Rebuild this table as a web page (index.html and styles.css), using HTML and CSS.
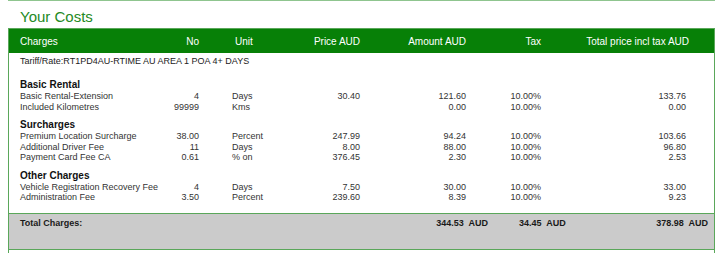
FILE: index.html
```html
<!DOCTYPE html>
<html>
<head>
<meta charset="utf-8">
<link rel="stylesheet" href="styles.css">
</head>
<body>
<div class="page">
  <div class="topline"></div>
  <h1 class="title">Your Costs</h1>
  <div class="box">
    <div class="grid head">
      <div>Charges</div>
      <div class="r">No</div>
      <div class="unit">Unit</div>
      <div class="r">Price AUD</div>
      <div class="r">Amount AUD</div>
      <div class="r">Tax</div>
      <div class="r tot">Total price incl tax AUD</div>
    </div>
    <div class="content">
      <div class="tariff">Tariff/Rate:RT1PD4AU-RTIME AU AREA 1 POA 4+ DAYS</div>

      <div class="section first">Basic Rental</div>
      <div class="grid row"><div>Basic Rental-Extension</div><div class="r">4</div><div class="unit">Days</div><div class="r">30.40</div><div class="r">121.60</div><div class="r">10.00%</div><div class="r">133.76</div></div>
      <div class="grid row"><div>Included Kilometres</div><div class="r">99999</div><div class="unit">Kms</div><div class="r"></div><div class="r">0.00</div><div class="r">10.00%</div><div class="r">0.00</div></div>

      <div class="section">Surcharges</div>
      <div class="grid row"><div>Premium Location Surcharge</div><div class="r">38.00</div><div class="unit">Percent</div><div class="r">247.99</div><div class="r">94.24</div><div class="r">10.00%</div><div class="r">103.66</div></div>
      <div class="grid row"><div>Additional Driver Fee</div><div class="r">11</div><div class="unit">Days</div><div class="r">8.00</div><div class="r">88.00</div><div class="r">10.00%</div><div class="r">96.80</div></div>
      <div class="grid row"><div>Payment Card Fee CA</div><div class="r">0.61</div><div class="unit">% on</div><div class="r">376.45</div><div class="r">2.30</div><div class="r">10.00%</div><div class="r">2.53</div></div>

      <div class="section">Other Charges</div>
      <div class="grid row"><div>Vehicle Registration Recovery Fee</div><div class="r">4</div><div class="unit">Days</div><div class="r">7.50</div><div class="r">30.00</div><div class="r">10.00%</div><div class="r">33.00</div></div>
      <div class="grid row"><div>Administration Fee</div><div class="r">3.50</div><div class="unit">Percent</div><div class="r">239.60</div><div class="r">8.39</div><div class="r">10.00%</div><div class="r">9.23</div></div>
    </div>
    <div class="total">
      <div>Total Charges:</div>
      <div class="r">344.53&nbsp; AUD</div>
      <div class="tax">34.45&nbsp; AUD</div>
      <div class="r">378.98&nbsp; AUD</div>
    </div>
    <div class="after"></div>
  </div>
</div>
</body>
</html>
```
FILE: styles.css
```css
html, body {
  margin: 0;
  padding: 0;
  background: #ffffff;
}
body {
  font-family: "Liberation Sans", Arial, sans-serif;
  color: #333333;
}
.page {
  padding-left: 8px;
  width: 707px;
}
.topline {
  height: 0;
  border-top: 1px solid #8fc58f;
}
.title {
  margin: 7px 0 3px 12px;
  font-size: 15px;
  line-height: 17px;
  font-weight: normal;
  color: #248a24;
}
.box {
  border-left: 1px solid #5aa75a;
  border-right: 1px solid #5aa75a;
  border-top: 1px solid #5aa75a;
}
.grid {
  display: grid;
  grid-template-columns: 140px 39px 101px 60px 106px 75px 145px;
  padding-left: 11px;
  white-space: nowrap;
}
.r {
  text-align: right;
}
.unit {
  padding-left: 33px;
}
.head {
  background: #078007;
  color: #ffffff;
  font-size: 10px;
  height: 24px;
  align-items: center;
}
.head .unit {
  padding-left: 36px;
}
.head .tot {
  margin-right: -3px;
}
.content {
  padding: 3px 0 9.5px 0;
  border-bottom: 1px solid #5aa75a;
}
.tariff {
  padding-left: 11px;
  font-size: 9px;
  line-height: 11px;
  color: #222222;
}
.section {
  padding-left: 11px;
  font-size: 10px;
  line-height: 12px;
  font-weight: bold;
  color: #111111;
  margin-top: 6.6px;
}
.section.first {
  margin-top: 12px;
}
.row {
  font-size: 9px;
  line-height: 10.7px;
  color: #333333;
}
.total {
  display: grid;
  grid-template-columns: 380px 88px 112px 108px;
  padding: 4.5px 0 0 11px;
  height: 30.5px;
  background: #cbcbcb;
  border-bottom: 1px solid #5aa75a;
  font-size: 9px;
  line-height: 11px;
  font-weight: bold;
  color: #1a1a1a;
  white-space: nowrap;
}
.total .tax {
  padding-left: 31px;
}
.after {
  height: 4px;
}
```
